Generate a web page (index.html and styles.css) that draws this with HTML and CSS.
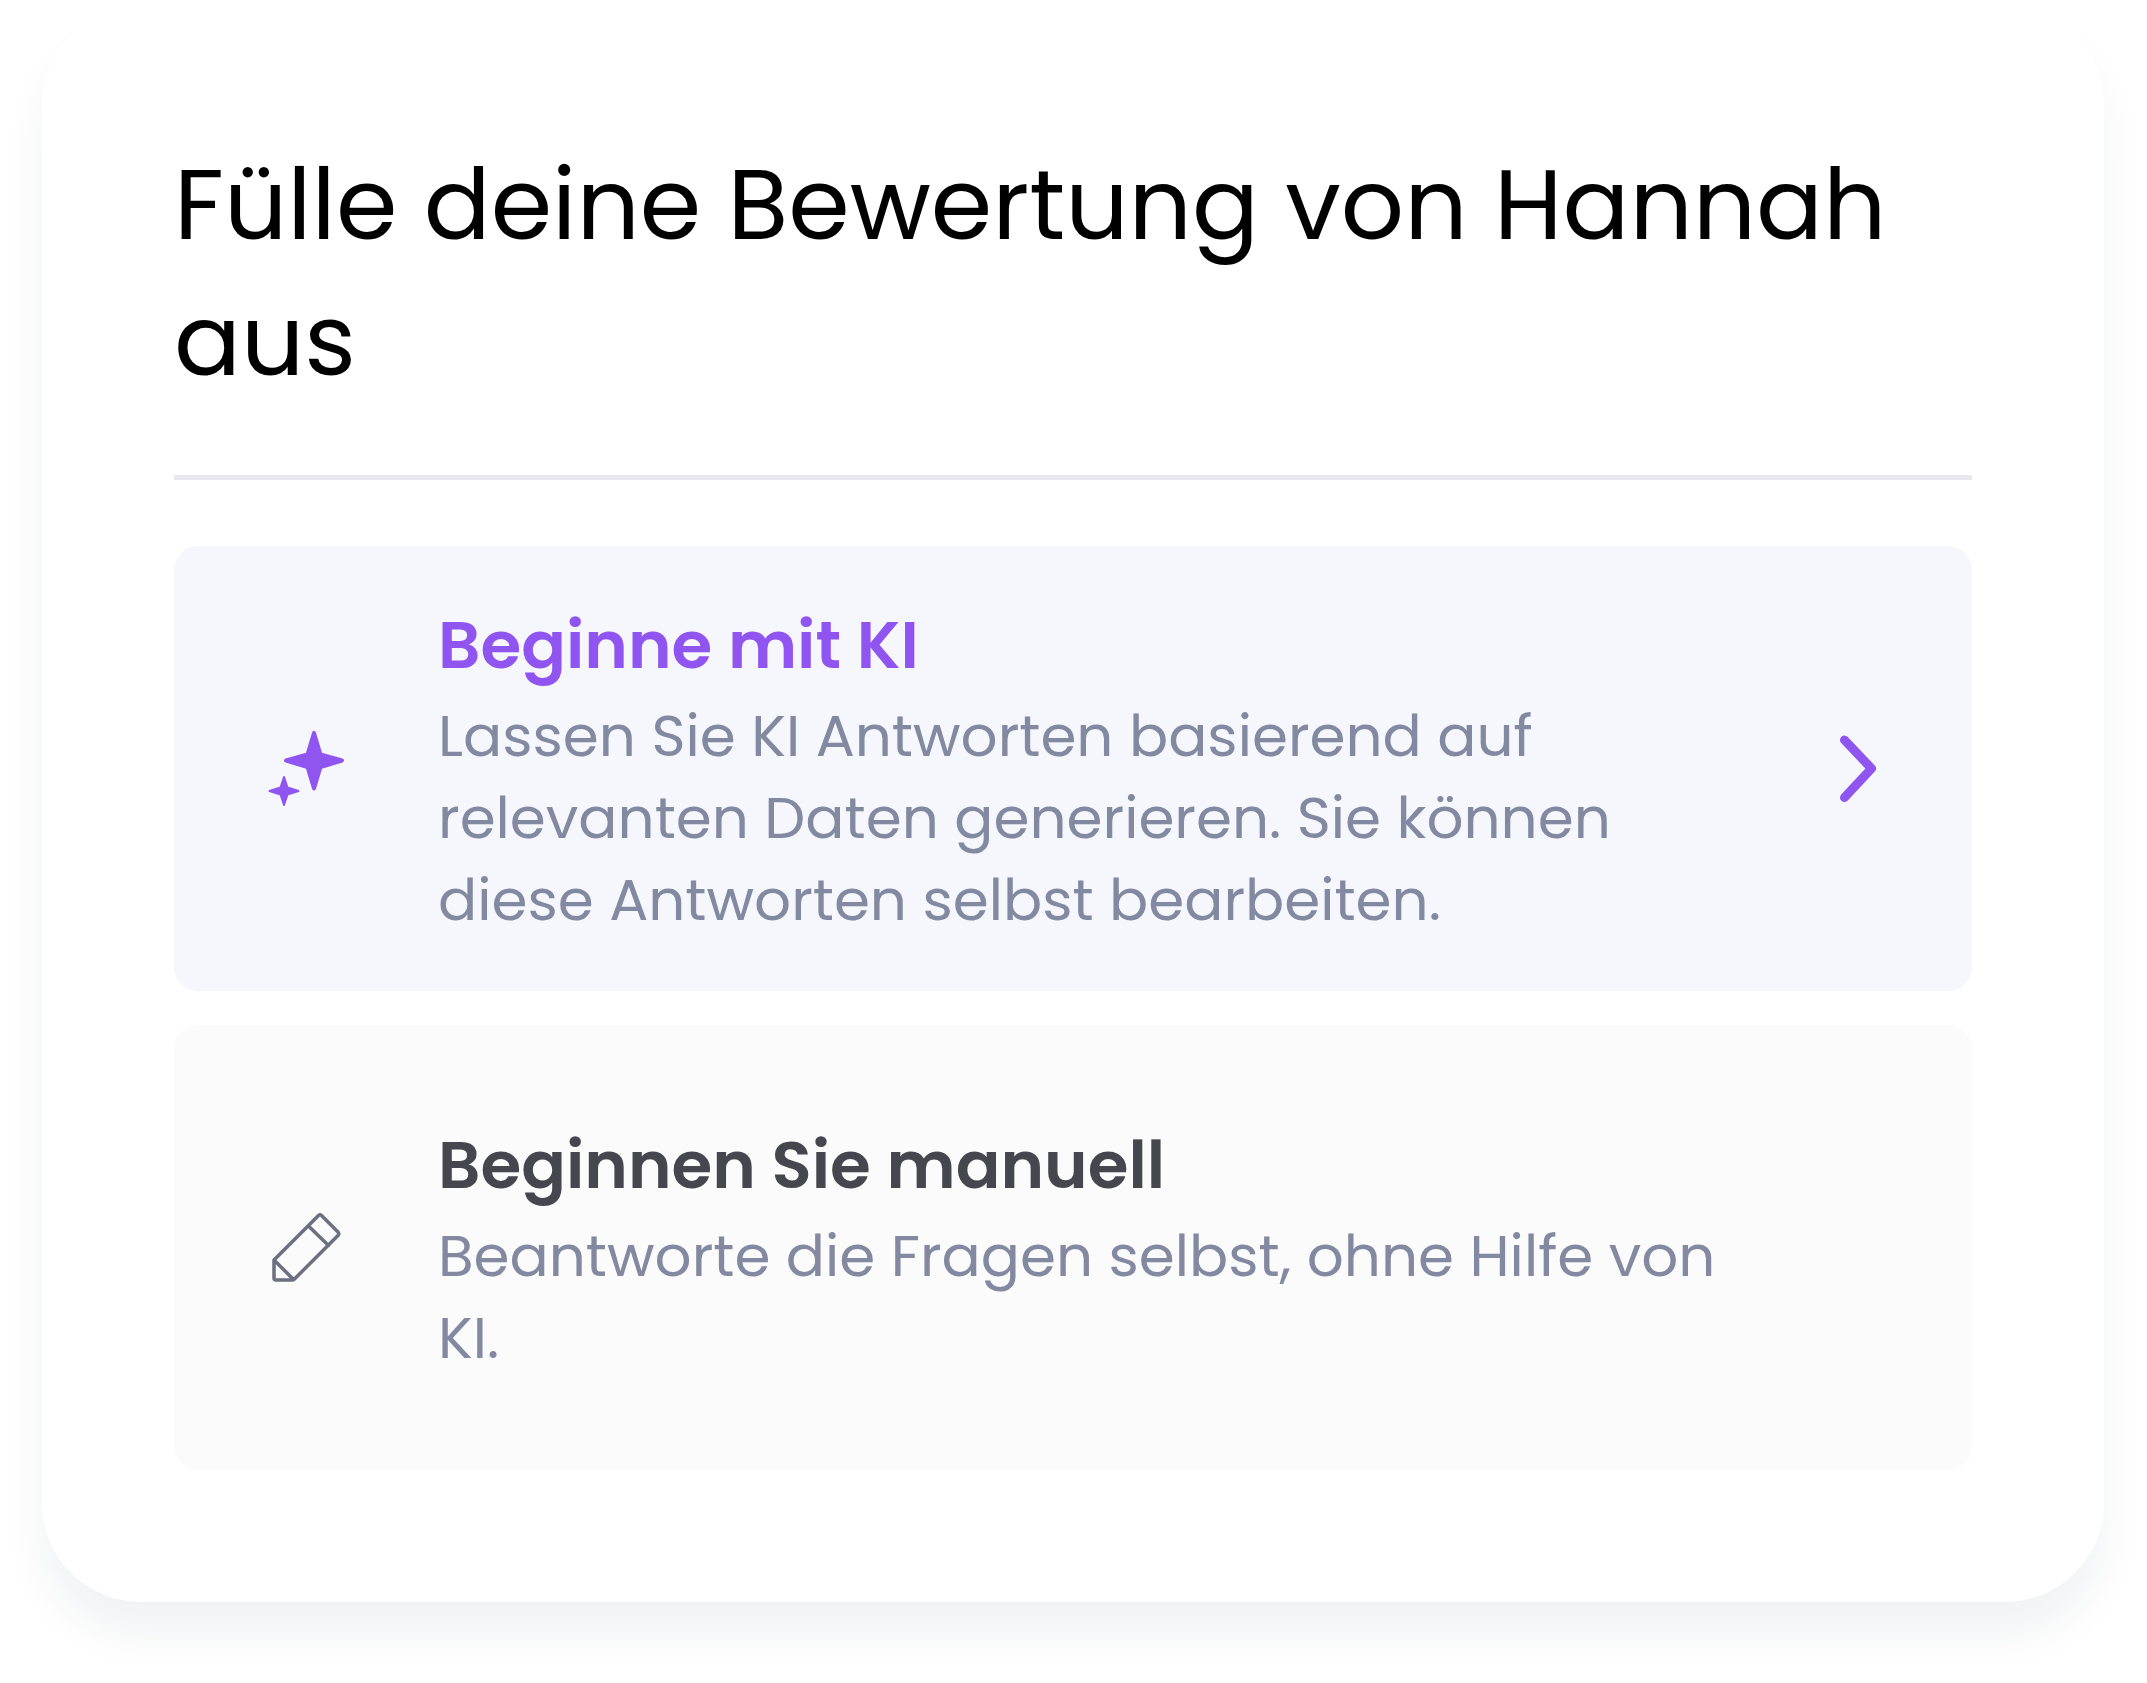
FILE: index.html
```html
<!DOCTYPE html>
<html lang="de">
<head>
    <meta charset="UTF-8">
    <meta name="viewport" content="width=device-width, initial-scale=1.0">
    <title>Bewertung ausfüllen</title>
    <link rel="stylesheet" href="styles.css">
</head>
<body>
    <main class="card">
        <h1 class="card-title">Fülle deine Bewertung von Hannah aus</h1>

        <div class="options">
            <button type="button" class="option option-ai">
                <svg class="option-icon" viewBox="0 0 132 132" aria-hidden="true">
                    <path class="star" stroke-width="4" d="M74 30 L80.500 51.500 L102 57.500 L80.500 64 L74 85.500 L67.500 64 L46 57.500 L67.500 51.500 Z"/>
                    <path class="star" stroke-width="2" d="M44 74 L47.500 84.500 L58.500 88 L47.500 91.500 L44 102 L40.500 91.500 L29.500 88 L40.500 84.500 Z"/>
                </svg>
                <span class="option-text">
                    <span class="option-title">Beginne mit KI</span>
                    <span class="option-description">Lassen Sie KI Antworten basierend auf relevanten Daten generieren. Sie können diese Antworten selbst bearbeiten.</span>
                </span>
                <svg class="option-arrow" viewBox="0 0 99 99" aria-hidden="true">
                    <path d="M37.500 21 L64.500 49.500 L37.500 78.500"/>
                </svg>
            </button>

            <button type="button" class="option option-manual">
                <svg class="option-icon" viewBox="0 0 132 132" aria-hidden="true">
                    <path class="pencil" d="M34 78 L78.500 33.500 Q80 32 81.500 33.500 L98 50 Q99.500 52 98 53.500 L54.500 97 Q53.500 98 52 98 L36 98 Q34 98 34 96 Z M68.500 44 L88.500 63.500 M34.500 78.500 L53.500 97.500"/>
                </svg>
                <span class="option-text">
                    <span class="option-title">Beginnen Sie manuell</span>
                    <span class="option-description">Beantworte die Fragen selbst, ohne Hilfe von KI.</span>
                </span>
                <span class="option-arrow"></span>
            </button>
        </div>
    </main>
</body>
</html>
```
FILE: styles.css
```css
:root {
    --primary-color: #9055f0;
    --background-color: #ffffff;
    --heading-color: #000000;
    --title-color: #46464f;
    --text-color: #8289a1;
    --icon-color: #6b6f80;
    --ai-bg: #f5f7fd;
    --manual-bg: #fbfbfb;
    --border-color: #e7e7ed;
}

* {
    box-sizing: border-box;
}

body {
    margin: 0;
    padding: 5px 43px 80px 42px;
    font-family: Poppins, Inter, "Open Sans", sans-serif;
    background-color: var(--background-color);
}

.card {
    padding: 132px;
    background-color: var(--background-color);
    border-radius: 99px;
    box-shadow: 0 33px 40px rgba(20, 45, 65, 0.06);
}

.card-title {
    margin: 0 0 66px;
    padding-bottom: 66px;
    border-bottom: 5px solid var(--border-color);
    color: var(--heading-color);
    font-size: 99px;
    font-weight: 400;
    line-height: 136px;
}

.options {
    display: grid;
    grid-auto-rows: 1fr;
    gap: 34px;
}

.option {
    display: flex;
    align-items: center;
    gap: 66px;
    width: 100%;
    padding: 50px 66px;
    border: none;
    border-radius: 24px;
    font-family: inherit;
    text-align: left;
    cursor: pointer;
}

.option-ai {
    background-color: var(--ai-bg);
}

.option-manual {
    background-color: var(--manual-bg);
}

.option-icon {
    flex: none;
    width: 132px;
    height: 132px;
}

.option-text {
    flex: 1;
}

.option-title,
.option-description {
    display: block;
}

.option-title {
    color: var(--title-color);
    font-size: 66px;
    font-weight: 600;
    line-height: 99px;
}

.option-ai .option-title {
    color: var(--primary-color);
}

.option-description {
    color: var(--text-color);
    font-size: 58px;
    line-height: 82px;
}

.option-arrow {
    flex: none;
    width: 99px;
    height: 99px;
    fill: none;
    stroke: var(--primary-color);
    stroke-width: 9;
    stroke-linecap: round;
    stroke-linejoin: round;
}

/* Icons */
.star {
    fill: var(--primary-color);
    stroke: var(--primary-color);
    stroke-linejoin: round;
}

.pencil {
    fill: none;
    stroke: var(--icon-color);
    stroke-width: 3.5;
    stroke-linecap: round;
    stroke-linejoin: round;
}
```
